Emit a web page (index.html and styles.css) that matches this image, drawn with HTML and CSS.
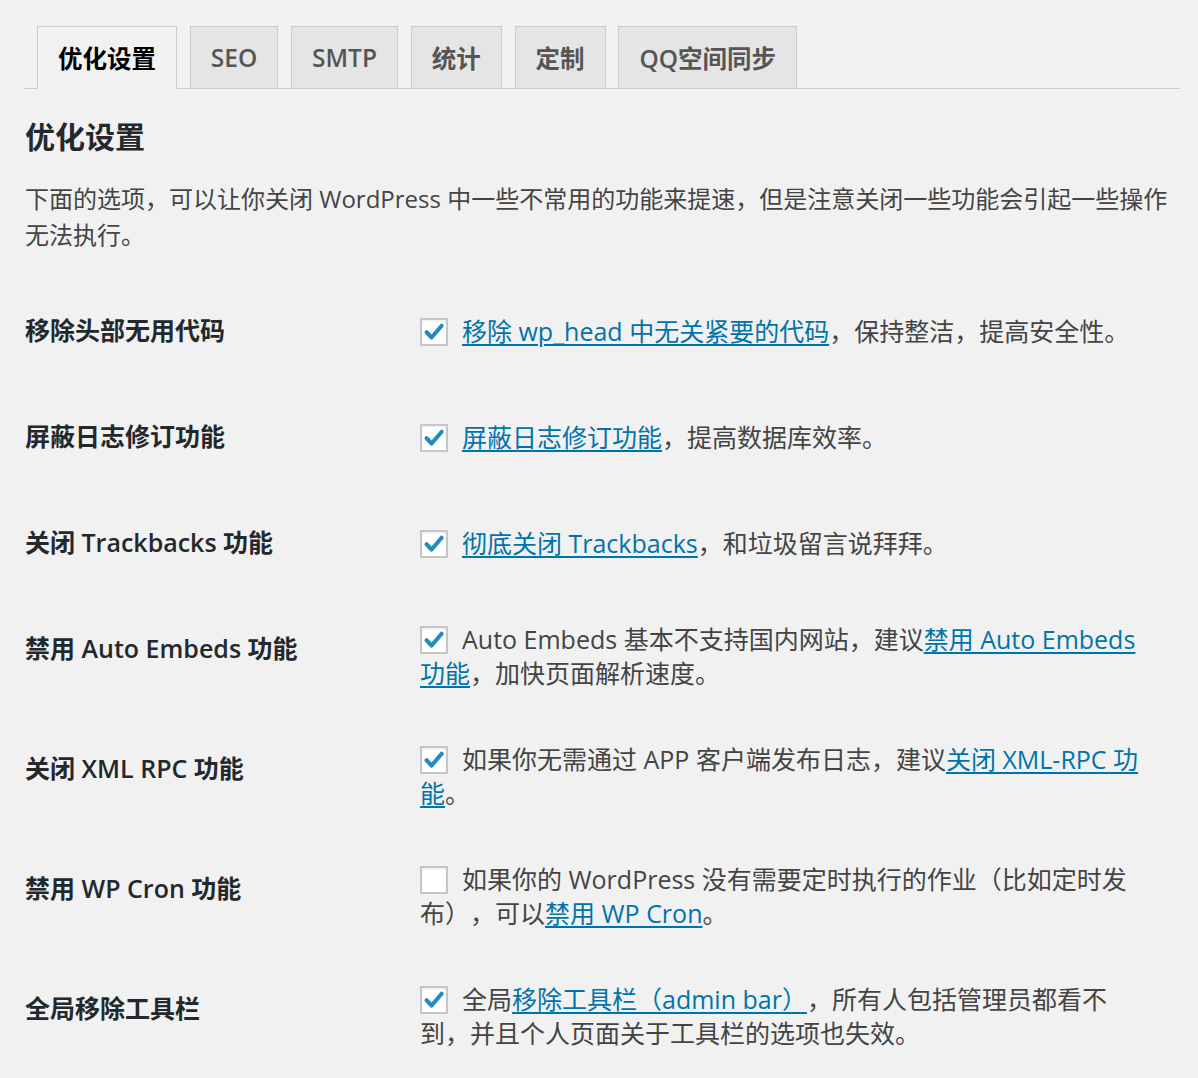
FILE: index.html
```html
<!DOCTYPE html>
<html lang="zh-CN">
<head>
<meta charset="utf-8">
<title>优化设置</title>
<link rel="stylesheet" href="styles.css">
</head>
<body>
<div class="wrap">
  <nav class="tabs">
    <a class="tab active">优化设置</a>
    <a class="tab">SEO</a>
    <a class="tab">SMTP</a>
    <a class="tab">统计</a>
    <a class="tab">定制</a>
    <a class="tab">QQ空间同步</a>
  </nav>
  <h2 class="title">优化设置</h2>
  <p class="desc">下面的选项，可以让你关闭 WordPress 中一些不常用的功能来提速，但是注意关闭一些功能会引起一些操作无法执行。</p>
  <table class="form-table">
    <tr>
      <th>移除头部无用代码</th>
      <td><span class="cb on"><svg viewBox="0 0 20 20"><path d="M3.8 10.2 L8 14.6 L16.4 4.8" /></svg></span><a href="#">移除 wp_head 中无关紧要的代码</a>，保持整洁，提高安全性。</td>
    </tr>
    <tr>
      <th>屏蔽日志修订功能</th>
      <td><span class="cb on"><svg viewBox="0 0 20 20"><path d="M3.8 10.2 L8 14.6 L16.4 4.8" /></svg></span><a href="#">屏蔽日志修订功能</a>，提高数据库效率。</td>
    </tr>
    <tr>
      <th>关闭 Trackbacks 功能</th>
      <td><span class="cb on"><svg viewBox="0 0 20 20"><path d="M3.8 10.2 L8 14.6 L16.4 4.8" /></svg></span><a href="#">彻底关闭 Trackbacks</a>，和垃圾留言说拜拜。</td>
    </tr>
    <tr>
      <th>禁用 Auto Embeds 功能</th>
      <td><span class="cb on"><svg viewBox="0 0 20 20"><path d="M3.8 10.2 L8 14.6 L16.4 4.8" /></svg></span>Auto Embeds 基本不支持国内网站，建议<a href="#">禁用 Auto Embeds 功能</a>，加快页面解析速度。</td>
    </tr>
    <tr>
      <th>关闭 XML RPC 功能</th>
      <td><span class="cb on"><svg viewBox="0 0 20 20"><path d="M3.8 10.2 L8 14.6 L16.4 4.8" /></svg></span>如果你无需通过 APP 客户端发布日志，建议<a href="#">关闭 XML-RPC 功能</a>。</td>
    </tr>
    <tr>
      <th>禁用 WP Cron 功能</th>
      <td><span class="cb"></span>如果你的 WordPress 没有需要定时执行的作业（比如定时发布），可以<a href="#">禁用 WP Cron</a>。</td>
    </tr>
    <tr>
      <th>全局移除工具栏</th>
      <td><span class="cb on"><svg viewBox="0 0 20 20"><path d="M3.8 10.2 L8 14.6 L16.4 4.8" /></svg></span>全局<a href="#">移除工具栏（admin bar）</a>，所有人包括管理员都看不到，并且个人页面关于工具栏的选项也失效。</td>
    </tr>
  </table>
</div>
</body>
</html>
```
FILE: styles.css
```css
html, body {
  margin: 0;
  padding: 0;
  background: #f1f1f1;
}
body {
  font-family: "Open Sans", "Noto Sans CJK SC", sans-serif;
  color: #444;
  text-spacing-trim: space-all;
}
.wrap {
  padding: 26px 18px 0 24px;
}
.tabs {
  display: flex;
  gap: 12.8px;
  padding-left: 13px;
  border-bottom: 1px solid #ccc;
  height: 62px;
  align-items: flex-end;
}
.tab {
  box-sizing: border-box;
  height: 63px;
  margin-bottom: -1px;
  padding: 0 20px;
  display: flex;
  align-items: center;
  font-size: 24.5px;
  font-weight: 600;
  color: #555;
  background: #e5e5e5;
  border: 1px solid #ccc;
}
.tab.active {
  background: #f1f1f1;
  color: #000;
  border-bottom-color: #f1f1f1;
}
.title {
  margin: 29px 0 0 1px;
  font-size: 30px;
  line-height: 38px;
  font-weight: 600;
  color: #23282d;
}
.desc {
  margin: 25px 0 0 1px;
  font-size: 24px;
  line-height: 36px;
  color: #444;
}
.form-table {
  margin-top: 25px;
  border-collapse: collapse;
  width: 1156px;
}
.form-table th {
  width: 396px;
  box-sizing: border-box;
  padding: 37px 0 39px 1px;
  text-align: left;
  vertical-align: top;
  font-size: 25px;
  line-height: 30px;
  font-weight: 600;
  color: #23282d;
}
.form-table td {
  padding: 26px 28px 26px 0;
  vertical-align: middle;
  font-size: 25px;
  line-height: 34px;
  color: #444;
}
.form-table a {
  color: #0073aa;
  text-decoration: underline;
  text-underline-offset: 3px;
  text-decoration-thickness: 1.5px;
}
.cb {
  display: inline-block;
  box-sizing: border-box;
  width: 28px;
  height: 28px;
  margin-right: 14px;
  vertical-align: -5px;
  background: #fff;
  border: 2px solid #c3c6ca;
  box-shadow: inset 0 1px 2px rgba(0,0,0,0.08);
}
.cb svg {
  display: block;
  width: 24px;
  height: 24px;
}
.cb svg path {
  fill: none;
  stroke: #1e8cbe;
  stroke-width: 3.4;
  stroke-linecap: round;
  stroke-linejoin: round;
}
```
